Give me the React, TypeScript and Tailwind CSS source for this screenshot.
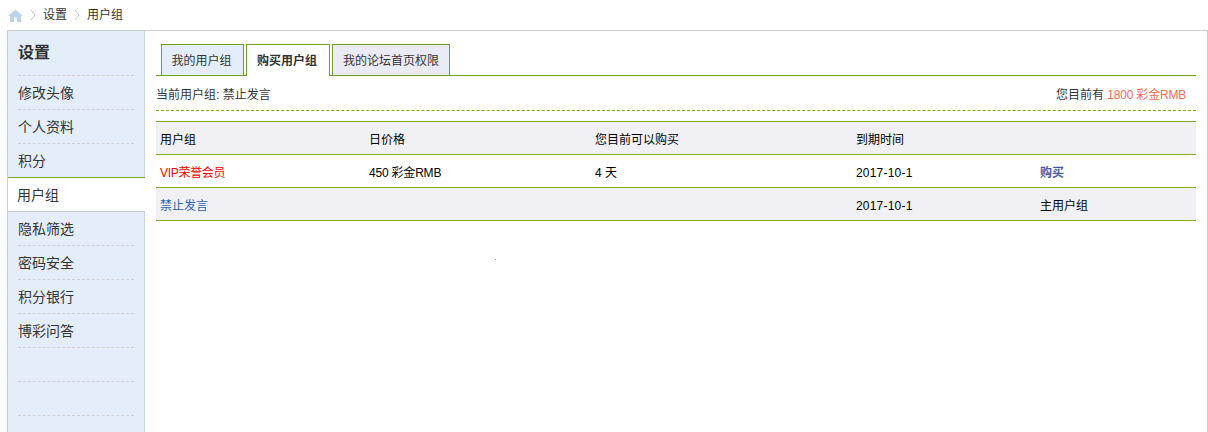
import React from "react";

const font = { fontFamily: '"Liberation Sans", "Noto Sans CJK SC", sans-serif' };

const items = ["修改头像", "个人资料", "积分", "用户组", "隐私筛选", "密码安全", "积分银行", "博彩问答", "", ""];

function Chevron() {
  return (
    <svg width="6" height="12" viewBox="0 0 6 12" className="mx-[7px]">
      <path d="M1 1 L5 6 L1 11" fill="none" stroke="#c4c8cc" strokeWidth="1" />
    </svg>
  );
}

function Row({ cells, fill }: { cells: React.ReactNode[]; fill: boolean }) {
  return (
    <div
      className={`grid h-[33px] grid-cols-[209px_226px_261px_184px_1fr] items-center border-b border-[#7fb020] pl-1 pt-[3px] text-xs text-black ${
        fill ? "bg-[#f1f0f5]" : "bg-white"
      }`}
    >
      {cells.map((c, i) => (
        <div key={i}>{c}</div>
      ))}
    </div>
  );
}

export default function App() {
  return (
    <div style={font} className="h-[432px] w-[1208px] overflow-hidden bg-white text-xs text-[#333]">
      <div className="flex h-[30px] items-center pl-2">
        <svg width="15" height="13" viewBox="0 0 15 13">
          <path d="M7.5 0.5 L15 7 H13 V13 H9 V8.5 H6 V13 H2 V7 H0 Z" fill="#bcd3e8" />
        </svg>
        <Chevron />
        <span>设置</span>
        <Chevron />
        <span>用户组</span>
      </div>
      <div className="relative ml-[7px] flex h-[402px] w-[1201px] border border-b-0 border-[#cdcdcd]">
        <div className="h-full w-[137px] shrink-0 border-r border-[#c9d6f0] bg-[#e4eefb]">
          <div className="mx-[10px] flex h-[45px] items-center border-b border-dashed border-[#cfcfd2] text-base font-bold text-[#333]">
            设置
          </div>
          {items.map((t, i) =>
            t === "用户组" ? (
              <div
                key={i}
                className="-mt-px flex h-[35px] w-[137px] items-center border-t border-b border-t-[#7aa82c] border-b-[#c4c4c4] bg-white pl-[9px] text-sm text-[#333]"
              >
                {t}
              </div>
            ) : (
              <div
                key={i}
                className="mx-[10px] flex h-[34px] items-center border-b border-dashed border-[#cfcfd2] text-sm text-[#333]"
              >
                {t}
              </div>
            )
          )}
        </div>
        <div className="w-[1051px] shrink-0 pl-[11px] pt-[13px]">
          <div className="flex h-[32px] items-start gap-[2px] border-b border-[#6fa01e] pl-[5px]">
            <div className="flex h-[31px] w-[83px] items-center justify-center border border-b-0 border-[#6fa01e] bg-[#e4eefa] pr-[2px] pt-[2px] text-[#333]">我的用户组</div>
            <div className="relative z-10 flex h-[32px] w-[84px] items-center justify-center border border-b-0 border-[#6fa01e] bg-white pr-[2px] font-bold text-[#333]">购买用户组</div>
            <div className="flex h-[31px] w-[118px] items-center justify-center border border-b-0 border-[#6fa01e] bg-[#ebebf6] pt-[2px] text-[#333]">我的论坛首页权限</div>
          </div>
          <div className="flex h-[35px] items-center justify-between border-b border-dashed border-[#77ad00] pt-[3px] pr-[10px]">
            <span>当前用户组: 禁止发言</span>
            <span>
              您目前有 <span className="tracking-[-0.2px] text-[#f26c4f]">1800 彩金RMB</span>
            </span>
          </div>
          <div className="mt-[10px] border-t border-[#7aa82c]">
            <Row fill cells={["用户组", "日价格", "您目前可以购买", "到期时间", ""]} />
            <Row
              fill={false}
              cells={[
                <span className="tracking-[-0.3px] text-[#f00]">VIP荣誉会员</span>,
                <span className="tracking-[-0.2px]">450 彩金RMB</span>,
                "4 天",
                <span className="tracking-[0.2px]">2017-10-1</span>,
                <span className="font-bold text-[#4a5a9e]">购买</span>,
              ]}
            />
            <Row
              fill
              cells={[
                <span className="text-[#2b63a8]">禁止发言</span>,
                "",
                "",
                <span className="tracking-[0.2px]">2017-10-1</span>,
                "主用户组",
              ]}
            />
          </div>
        </div>
        <div className="absolute left-[487px] top-[228px] h-px w-px bg-[#999]" />
      </div>
    </div>
  );
}
